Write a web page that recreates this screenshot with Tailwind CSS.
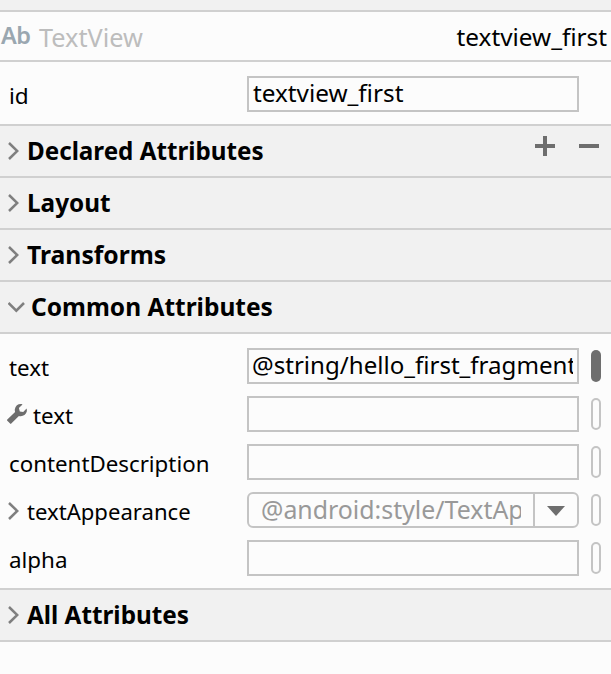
<!DOCTYPE html>
<html lang="en">
<head>
<meta charset="utf-8">
<title>Attributes</title>
<script src="https://cdn.jsdelivr.net/npm/@tailwindcss/browser@4"></script>
</head>
<body class="w-[611px] h-[674px] overflow-hidden bg-[#fcfcfc] text-black font-['Noto_Sans','Open_Sans',sans-serif] text-[22.3px] whitespace-nowrap">
<div class="h-3 bg-[#f1f1f1] border-b-2 border-[#d0d0d0]"></div>

<header class="h-[50px] flex items-center border-b-2 border-[#d0d0d0] pl-px pr-1">
  <span class="w-[38px] text-[23.5px] tracking-[-0.5px] leading-8 font-semibold text-[#9aa7b0] -mt-[2px]">Ab</span>
  <span class="text-[25.3px] leading-8 text-[#bdbdbd] mt-px">TextView</span>
  <span class="ml-auto text-[24.3px] leading-8 mt-px">textview_first</span>
</header>

<div class="h-16 flex items-center border-b-2 border-[#d0d0d0] pl-[9px]">
  <label class="w-[238px] leading-8 pt-[5px] text-[22.6px]">id</label>
  <div class="w-[332px] h-9 mt-0.5 border-2 border-[#c4c4c4] pl-1 leading-[30px] text-[24.3px]">textview_first</div>
</div>

<section class="h-[52px] flex items-center bg-[#f1f1f1] border-b-2 border-[#d0d0d0] pl-2 pr-3 font-bold text-[24.2px]">
  <svg class="w-[11px] h-[18px] mr-2" viewBox="0 0 11 18" fill="none" stroke="#7f7f7f" stroke-width="2.5"><path d="M1 1L9.3 9L1 17"/></svg>
  <h2>Declared Attributes</h2>
  <svg class="w-5 h-5 ml-auto mb-[10px]" viewBox="0 0 20 20" fill="#6e6e6e"><path d="M8 0h4v8h8v4h-8v8H8v-8H0V8h8z"/></svg>
  <svg class="w-5 h-5 ml-6 mb-[10px]" viewBox="0 0 20 20" fill="#6e6e6e"><path d="M0 8h20v4H0z"/></svg>
</section>
<section class="h-[52px] flex items-center bg-[#f1f1f1] border-b-2 border-[#d0d0d0] pl-2 font-bold text-[24.3px]">
  <svg class="w-[11px] h-[18px] mr-2" viewBox="0 0 11 18" fill="none" stroke="#7f7f7f" stroke-width="2.5"><path d="M1 1L9.3 9L1 17"/></svg>
  <h2>Layout</h2>
</section>
<section class="h-[52px] flex items-center bg-[#f1f1f1] border-b-2 border-[#d0d0d0] pl-2 font-bold text-[24.7px]">
  <svg class="w-[11px] h-[18px] mr-2" viewBox="0 0 11 18" fill="none" stroke="#7f7f7f" stroke-width="2.5"><path d="M1 1L9.3 9L1 17"/></svg>
  <h2>Transforms</h2>
</section>
<section class="h-[52px] flex items-center bg-[#f1f1f1] border-b-2 border-[#d0d0d0] pl-2 font-bold text-[24.5px]">
  <svg class="w-[17px] h-[11px] mr-[6px]" viewBox="0 0 17 11" fill="none" stroke="#7f7f7f" stroke-width="2.5"><path d="M.5 1L8.3 8.7L16 1"/></svg>
  <h2>Common Attributes</h2>
</section>

<div class="h-64 pt-2 border-b-2 border-[#d0d0d0]">
  <div class="h-12 flex items-center pl-[9px]">
    <label class="w-[238px] leading-8 pt-[3px]">text</label>
    <div class="w-[332px] h-9 border-2 border-[#c4c4c4] pl-[3px] pr-1 leading-[29px] text-[24.1px]"><div class="overflow-hidden h-8">@string/hello_first_fragment</div></div>
    <span class="w-[10px] h-8 ml-3 rounded-full bg-[#6e6e6e]"></span>
  </div>
  <div class="h-12 flex items-center pl-[7px]">
    <svg class="w-5 h-5 mr-[6px]" viewBox="0 0 20 20" fill="#6e6e6e"><path d="M15.5.4C12-.7 8.5 1.5 7.9 5c-.2 1.1-.1 2 .2 3L.3 15.5a.8.8 0 0 0 0 1.2l2.8 2.9a.8.8 0 0 0 1.2 0l7.6-7.7c3.3 1.1 6.9-.9 7.8-4.1.3-1.1.2-2.2-.1-3.2L16.2 8 12.8 7.4 11.9 4z"/></svg>
    <label class="w-[214px] leading-8 pt-[3px]">text</label>
    <div class="w-[332px] h-9 border-2 border-[#c4c4c4]"></div>
    <span class="w-[10px] h-8 ml-3 rounded-full border-2 border-[#c4c4c4]"></span>
  </div>
  <div class="h-12 flex items-center pl-[9px]">
    <label class="w-[238px] leading-8 pt-[3px]">contentDescription</label>
    <div class="w-[332px] h-9 border-2 border-[#c4c4c4]"></div>
    <span class="w-[10px] h-8 ml-3 rounded-full border-2 border-[#c4c4c4]"></span>
  </div>
  <div class="h-12 flex items-center pl-2">
    <svg class="w-[11px] h-[18px] mr-2 mt-0.5" viewBox="0 0 11 18" fill="none" stroke="#7f7f7f" stroke-width="2.5"><path d="M1 1L9.3 9L1 17"/></svg>
    <label class="w-[220px] leading-8 pt-px text-[22.1px]">textAppearance</label>
    <div class="w-[332px] h-9 flex border-2 border-[#c4c4c4] rounded-md text-[24.9px] leading-[31px] text-[#999]">
      <div class="w-[272px] overflow-hidden pl-[12px]">@android:style/TextAp</div>
      <div class="w-3"></div>
      <div class="flex-1 flex items-center justify-center border-l-2 border-[#c4c4c4]"><svg class="w-[18px] h-[10px] mt-0.5" viewBox="0 0 18 10" fill="#6e6e6e"><path d="M0 0h18L9 10z"/></svg></div>
    </div>
    <span class="w-[10px] h-8 ml-3 rounded-full border-2 border-[#c4c4c4]"></span>
  </div>
  <div class="h-12 flex items-center pl-[9px]">
    <label class="w-[238px] leading-8 pt-[3px] text-[22.4px]">alpha</label>
    <div class="w-[332px] h-9 border-2 border-[#c4c4c4]"></div>
    <span class="w-[10px] h-8 ml-3 rounded-full border-2 border-[#c4c4c4]"></span>
  </div>
</div>

<section class="h-[52px] flex items-center bg-[#f1f1f1] border-b-2 border-[#d0d0d0] pl-2 font-bold text-[24.3px]">
  <svg class="w-[11px] h-[18px] mr-2" viewBox="0 0 11 18" fill="none" stroke="#7f7f7f" stroke-width="2.5"><path d="M1 1L9.3 9L1 17"/></svg>
  <h2>All Attributes</h2>
</section>
</body>
</html>
